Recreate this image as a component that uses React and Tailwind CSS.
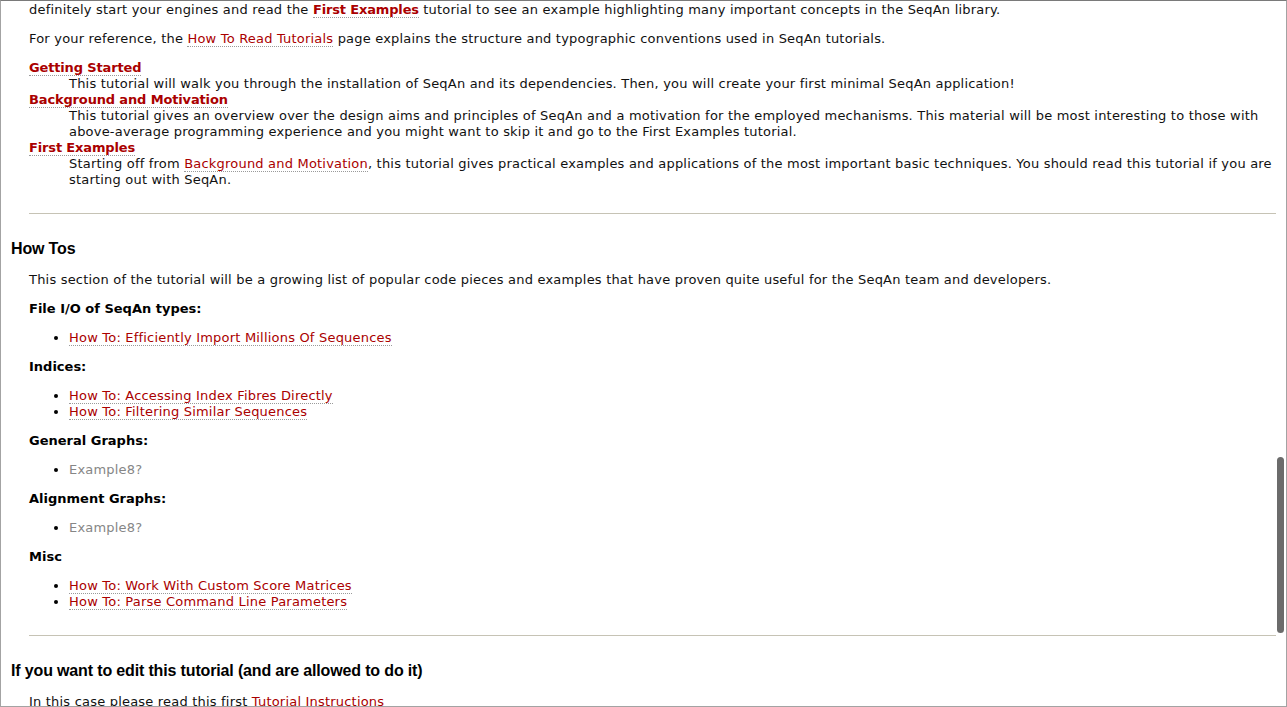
import React from 'react';

const font = { fontFamily: '"DejaVu Sans", Verdana, sans-serif' };

const Link = ({ children, bold }) => (
  <a className={`text-[#aa0000] border-b border-dotted border-[#9a9a9a] ${bold ? 'font-bold tracking-[-0.15px]' : ''}`}>
    {children}
  </a>
);

const Heading = ({ children }) => (
  <h2 className="-ml-[18px] mt-[25px] mb-[13px] text-[16px] leading-[20px] font-bold text-black font-['Liberation_Sans',Arial,sans-serif] tracking-[-0.15px]">
    {children}
  </h2>
);

const Sub = ({ children }) => (
  <p className="my-[13px] font-bold text-black tracking-normal">{children}</p>
);

const Bullets = ({ items }) => (
  <ul className="my-[13px] list-disc pl-[40px] marker:text-black">
    {items.map((it, i) => (
      <li key={i}>
        {it.missing ? <span className="text-[#868686]">{it.text}</span> : <Link>{it.text}</Link>}
      </li>
    ))}
  </ul>
);

const Def = ({ term, children }) => (
  <>
    <dt><Link bold>{term}</Link></dt>
    <dd className="ml-[40px]">{children}</dd>
  </>
);

export default function App() {
  return (
    <div className="relative w-[1287px] h-[707px] overflow-hidden bg-white border border-[#a3a3a3] border-t-[#7a7a7a]">
      <div style={font} className="pt-px pl-[28px] pr-[10px] text-[13px] leading-[16px] tracking-[0.2px] text-[#111]">
        <p className="mb-[13px]">
          definitely start your engines and read the <Link bold>First Examples</Link> tutorial to see an example highlighting many important concepts in the SeqAn library.
        </p>
        <p className="my-[13px]">
          For your reference, the <Link>How To Read Tutorials</Link> page explains the structure and typographic conventions used in SeqAn tutorials.
        </p>
        <dl className="mt-[12px] mb-[13px]">
          <Def term="Getting Started">
            This tutorial will walk you through the installation of SeqAn and its dependencies. Then, you will create your first minimal SeqAn application!
          </Def>
          <Def term="Background and Motivation">
            This tutorial gives an overview over the design aims and principles of SeqAn and a motivation for the employed mechanisms. This material will be most interesting to those with above-average programming experience and you might want to skip it and go to the First Examples tutorial.
          </Def>
          <Def term="First Examples">
            Starting off from <Link>Background and Motivation</Link>, this tutorial gives practical examples and applications of the most important basic techniques. You should read this tutorial if you are starting out with SeqAn.
          </Def>
        </dl>
        <hr className="mt-[25px] border-0 border-t border-[#c6c3b5]" />

        <Heading>How Tos</Heading>
        <p className="my-[13px]">
          This section of the tutorial will be a growing list of popular code pieces and examples that have proven quite useful for the SeqAn team and developers.
        </p>
        <Sub>File I/O of SeqAn types:</Sub>
        <Bullets items={[{ text: 'How To: Efficiently Import Millions Of Sequences' }]} />
        <Sub>Indices:</Sub>
        <Bullets items={[{ text: 'How To: Accessing Index Fibres Directly' }, { text: 'How To: Filtering Similar Sequences' }]} />
        <Sub>General Graphs:</Sub>
        <Bullets items={[{ text: 'Example8?', missing: true }]} />
        <Sub>Alignment Graphs:</Sub>
        <Bullets items={[{ text: 'Example8?', missing: true }]} />
        <Sub>Misc</Sub>
        <Bullets items={[{ text: 'How To: Work With Custom Score Matrices' }, { text: 'How To: Parse Command Line Parameters' }]} />
        <hr className="mt-[25px] border-0 border-t border-[#c6c3b5]" />

        <Heading>If you want to edit this tutorial (and are allowed to do it)</Heading>
        <p className="my-[13px]">
          In this case please read this first <a className="text-[#aa0000]">Tutorial Instructions</a>
        </p>
      </div>
      {/* overlay scrollbar */}
      <div className="absolute right-[2px] top-[456px] w-[7px] h-[176px] rounded-full bg-[#6b6b6b]" />
    </div>
  );
}
